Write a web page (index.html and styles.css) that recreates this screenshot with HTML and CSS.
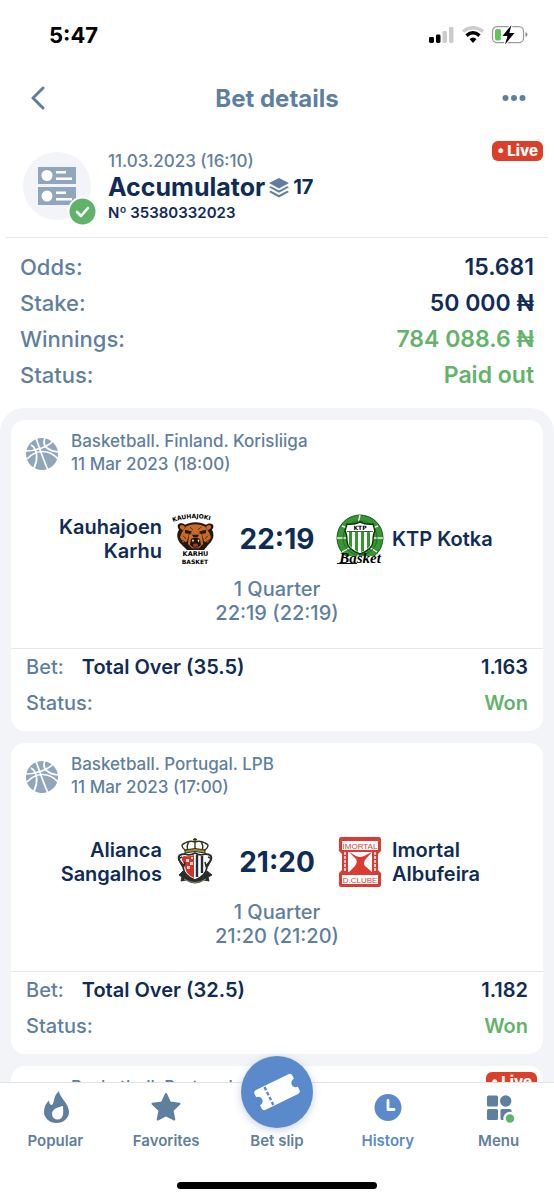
FILE: index.html
```html
<!DOCTYPE html>
<html lang="en">
<head>
	<meta charset="utf-8" />
	<meta name="viewport" content="width=device-width, initial-scale=1" />
	<title>Bet details</title>
	<link rel="stylesheet" href="styles.css">
</head>
<body>
    <!-- Shared icons -->
    <svg class="sprite" aria-hidden="true">
        <symbol id="ball" viewBox="0 0 32 32">
            <circle cx="16" cy="16" r="16" fill="#8fa6bd"/>
            <g fill="none" stroke="#fff" stroke-width="1.7">
                <path d="M10 0C13 9 17 21 22 32"/>
                <path d="M0 13C9 13 22 9 27 3"/>
                <path d="M19 0C15 9 24 13 32 14"/>
                <path d="M1 21C9 12 22 10 32 21"/>
                <path d="M5 7C12 11 12 22 8 30"/>
            </g>
        </symbol>
    </svg>

    <div class="statusbar">
        <span class="clock">5:47</span>
        <svg width="100" height="20" viewBox="0 0 100 20" aria-hidden="true">
            <rect x="1" y="12" width="5" height="6" rx="1.4"/>
            <rect x="8" y="9.500" width="4.500" height="8.500" rx="1.400"/>
            <rect x="14.500" y="6" width="4.500" height="12" rx="1.400" fill="#ccc"/>
            <rect x="21" y="2" width="4.500" height="16" rx="1.400" fill="#ccc"/>
            <path d="M35 6.500Q45 -1 55 6.500" fill="none" stroke="#ccc" stroke-width="3.400"/>
            <path d="M38.500 10.600Q45 5 51.500 10.600" fill="none" stroke="#000" stroke-width="3.400"/>
            <path d="M41.500 14Q45 11 48.500 14L45 18Z"/>
            <rect x="64.500" y="1.700" width="31" height="16" rx="4.500" fill="none" stroke="#9b9b9b" stroke-width="1.300"/>
            <path d="M97.500 7v5q2-.6 2-2.500t-2-2.500z" fill="#8b8b8b"/>
            <rect x="67" y="4" width="6" height="11.500" rx="2" fill="#61c655"/>
            <path d="M83.500 0L74.500 11h5L77 19.500 86.500 8h-5.200z" stroke="#fff" stroke-width="2.400" paint-order="stroke"/>
        </svg>
    </div>

    <header class="topbar">
        <button class="topbar-btn" type="button" aria-label="Back">
            <svg width="16" height="24" viewBox="0 0 16 24"><path d="M13 2L3 12 13 22" fill="none" stroke="#5f7f9f" stroke-width="3" stroke-linecap="round" stroke-linejoin="round"/></svg>
        </button>
        <h1>Bet details</h1>
        <button class="topbar-btn more" type="button" aria-label="More">
            <svg width="24" height="8" viewBox="0 0 24 8" fill="#5f7f9f"><circle cx="3.500" cy="4" r="3"/><circle cx="12" cy="4" r="3"/><circle cx="20.500" cy="4" r="3"/></svg>
        </button>
    </header>

    <main>
        <section class="summary">
            <svg class="avatar" width="74" height="74" viewBox="0 0 74 74" aria-hidden="true">
                <circle cx="34" cy="34" r="34" fill="#f3f4f8"/>
                <path d="M15 15h38v17H15zM15 35h38v18H15z" fill="#8fa6bd"/>
                <g fill="#fff">
                    <circle cx="24" cy="23.500" r="5.500"/><circle cx="24" cy="44" r="5.500"/>
                    <path d="M33 19h10v2.400H33zM33 25.500h16v2.400H33zM33 39.500h10v2.400H33zM33 46h16v2.400H33z"/>
                </g>
                <circle cx="59.500" cy="59.500" r="14" fill="#5fb36b" stroke="#fff" stroke-width="2"/>
                <path d="M54 60l4 4 7-8" fill="none" stroke="#fff" stroke-width="2.600" stroke-linecap="round" stroke-linejoin="round"/>
            </svg>
            <div class="summary-text">
                <div class="summary-date">11.03.2023 (16:10)</div>
                <h2>Accumulator
                    <svg width="20" height="20" viewBox="0 0 20 20" fill="#5f7f9f" aria-hidden="true"><path d="M10 0L20 5 10 10.500 0 5zM1.800 8.200L10 12.500 18.200 8.200 20 9.300 10 14.700 0 9.300zM1.800 12.800L10 17 18.200 12.800 20 14 10 19.500 0 14z"/></svg>
                    <span class="count">17</span>
                </h2>
                <div class="summary-no">Nº 35380332023</div>
            </div>
            <span class="live">• Live</span>
        </section>

        <dl class="totals">
            <div class="row"><dt>Odds:</dt><dd>15.681</dd></div>
            <div class="row"><dt>Stake:</dt><dd>50 000 ₦</dd></div>
            <div class="row"><dt>Winnings:</dt><dd class="green">784 088.6 ₦</dd></div>
            <div class="row"><dt>Status:</dt><dd class="green">Paid out</dd></div>
        </dl>

        <div class="events">
            <article class="card">
                <div class="card-head">
                    <svg class="sport" width="32" height="32"><use href="#ball"/></svg>
                    <div class="league">Basketball. Finland. Korisliiga<br>11 Mar 2023 (18:00)</div>
                </div>
                <div class="match">
                    <span class="team home">Kauhajoen Karhu</span>
                    <svg class="crest" width="50" height="50" viewBox="0 0 50 50" aria-hidden="true">
                        <path id="arc" d="M4 8Q26 0 50 9" fill="none"/>
                        <text class="crest-bold" font-size="6"><textPath href="#arc">KAUHAJOKI</textPath></text>
                        <g transform="translate(0 1.500) scale(1 .84)">
                            <path d="M10 17C6 10 12 7 16 11 22 7 31 7 37 11 42 7 47 11 43 17 46 23 44 30 40 34L35 41H18L12 34C8 29 7 22 10 17z" fill="#23180f"/>
                            <path d="M11 15C10 11 14 10 16 14L14 18zM42 15C43 11 39 10 37 14L39 18zM17 13Q26 8 36 13L40 20 42 26 39 32 35 31 33 22 27 20 20 22 18 31 14 32 11 26 13 20z" fill="#c96a26"/>
                            <path d="M16 17l7 2-2 3-5-1zM37 17l-7 2 2 3 5-1z" fill="#23180f"/>
                            <path d="M20 23L26.500 19 33 23 34 34 30 39H23L19 34z" fill="#c86e29"/>
                            <path d="M23 23h7l-1.500 3h-4zM22 28q4.500-3 9 0l1 7-3 3h-5l-3-3z" fill="#21120c"/>
                            <path d="M24 35q2.500-4 5 0v2h-5z" fill="#a63a24"/>
                            <path d="M23 29l1 3 1-3M28.500 29l1 3 1-3" fill="#fff"/>
                            <path d="M14 24l3 4M12 29l4 2M39 24l-3 4M41 29l-4 2M21 14l3 3M32 14l-3 3" stroke="#4a2a14"/>
                        </g>
                        <text class="crest-bold" x="26.500" y="42" font-size="6.500" text-anchor="middle">KARHU</text>
                        <text class="crest-bold" x="26" y="49.500" font-size="6" text-anchor="middle">BASKET</text>
                    </svg>
                    <strong class="score">22:19</strong>
                    <svg class="crest" width="50" height="50" viewBox="0 0 50 50" aria-hidden="true">
                        <circle cx="25" cy="24" r="23" fill="#36962f" stroke="#185520"/>
                        <path d="M25 1l-2 9M7 12l8 3M2 24h11M7 38l9-5M43 12l-8 3M48 24H37M42 38l-8-5M23 40v7" stroke="#e5f5df" stroke-width="1.400"/>
                        <circle cx="25" cy="24" r="17" fill="none" stroke="#1e6521" stroke-width=".8"/>
                        <path d="M12 10q7 1 13-2 6 3 13 2l2 7q-2 3-2 10 0 8-13 13-13-5-13-13 0-7-2-10z" fill="#fff" stroke="#15301a" stroke-width="1.400"/>
                        <path d="M14 18h3v16l-3-3zM20 18h3v20l-3-2zM26 18h3v19l-3 1zM32 18h3v14l-3 3z" fill="#36962f"/>
                        <path d="M12 17.500h26" stroke="#15301a" stroke-width=".8"/>
                        <text class="crest-bold" x="25" y="16" font-size="6" text-anchor="middle">KTP</text>
                        <path d="M0 42h50v8H0z" fill="#fff"/>
                        <path d="M2 49.500H22" stroke="#111"/>
                        <text class="crest-script" x="25" y="49" font-size="15" text-anchor="middle">Basket</text>
                    </svg>
                    <span class="team">KTP Kotka</span>
                </div>
                <div class="period">1 Quarter<br>22:19 (22:19)</div>
                <dl class="bet">
                    <div class="row"><dt>Bet:</dt><dd class="pick">Total Over (35.5)</dd><dd>1.163</dd></div>
                    <div class="row"><dt>Status:</dt><dd class="green">Won</dd></div>
                </dl>
            </article>

            <article class="card">
                <div class="card-head">
                    <svg class="sport" width="32" height="32"><use href="#ball"/></svg>
                    <div class="league">Basketball. Portugal. LPB<br>11 Mar 2023 (17:00)</div>
                </div>
                <div class="match">
                    <span class="team home">Alianca Sangalhos</span>
                    <svg class="crest" width="50" height="50" viewBox="0 0 50 50" aria-hidden="true">
                        <path d="M16 13q-6-5 0-7 5-3 10-1 5-2 10 1 6 2 0 7zM26 1v13M24 2.500h4M20 5q-3 4-1 8M32 5q3 4 1 8" fill="none" stroke="#33351f" stroke-width="1.400"/>
                        <path d="M16 13q10-3 20 0v3q-10-3-20 0z" fill="#a08b35" stroke="#33351f"/>
                        <path d="M10 38l4-4 3 4q9 8 18 0l3-4 5 4-4 2 1 4-5-1q-9 6-18 0l-5 1 1-4z" fill="#282d29" stroke="#282d29"/>
                        <path d="M16 17q5 2 10-1 5 3 10 1 8 0 6 6l-4 7q-1 9-12 13-11-4-12-13l-4-7q-2-6 6-6z" fill="#fff" stroke="#282d29" stroke-width="1.800"/>
                        <path d="M15 19q6 1 10-1v23q-9-4-9-12l-3-6q-1-3 2-4z" fill="#cf332e"/>
                        <path d="M17 22h3v3h-3zM21 25h3v3h-3zM18 29h3v3h-3zM22 20h2v2h-2z" fill="#f2d5cd"/>
                        <path d="M28 18v22M33 19v17" stroke="#222c38" stroke-width="2.400"/>
                        <path d="M13 20q-4 1-2 4l4 5 1-4M39 20q4 1 2 4l-4 5-1-4" fill="none" stroke="#282d29" stroke-width="1.500"/>
                        <path d="M15 42q11 7 22 0" fill="none" stroke="#849077"/>
                    </svg>
                    <strong class="score">21:20</strong>
                    <svg class="crest" width="50" height="50" viewBox="0 0 50 50" aria-hidden="true">
                        <path d="M6 0h38q2 0 2 2v12l-3 3v16l3 3v12q0 2-2 2H6q-2 0-2-2V36l3-3V17l-3-3V2q0-2 2-2z" fill="#dc3b33"/>
                        <path d="M7 4h36v9H7zM7 38h36v9H7zM13 15h24v20H13z" fill="#fff"/>
                        <path d="M14 15l7 4q4 2 8 0l8-4-7 8q-2 4 0 6l7 6H14l6-6q3-4 1-7z" fill="#dc3b33"/>
                        <path d="M10 15v20M40 15v20" stroke="#fff" stroke-width="1.500" stroke-dasharray="3 1"/>
                        <text class="crest-red" x="25" y="11.500" font-size="8" text-anchor="middle">IMORTAL</text>
                        <text class="crest-red" x="25" y="45.500" font-size="8" text-anchor="middle">D.CLUBE</text>
                    </svg>
                    <span class="team">Imortal Albufeira</span>
                </div>
                <div class="period">1 Quarter<br>21:20 (21:20)</div>
                <dl class="bet">
                    <div class="row"><dt>Bet:</dt><dd class="pick">Total Over (32.5)</dd><dd>1.182</dd></div>
                    <div class="row"><dt>Status:</dt><dd class="green">Won</dd></div>
                </dl>
            </article>

            <article class="card">
                <div class="card-head">
                    <svg class="sport" width="32" height="32"><use href="#ball"/></svg>
                    <div class="league">Basketball. Portugal. LPB</div>
                    <span class="live">• Live</span>
                </div>
            </article>
        </div>
    </main>

    <nav>
        <div class="tabs">
            <a class="tab" href="#popular">
                <svg width="32" height="32" viewBox="-4 0 32 32"><path d="M16 0C16 6 26 12 26 21A12.500 11 0 0 1 1 21C1 16 3 12 6 9.500 6 12 7 14 9 14 12 11 10 5 16 0zM20 15C15 16 9 18 9 23A5.500 5.500 0 0 0 20 23C20.500 20 20 18 20 15z" fill="#5f7f9f" fill-rule="evenodd"/></svg>
                Popular
            </a>
            <a class="tab" href="#favorites">
                <svg width="32" height="32" viewBox="0 0 32 32"><path d="M16 3L20 11.500 29.500 12.800 22.500 19.500 24.300 28.500 16 24.300 7.700 28.500 9.500 19.500 2.500 12.800 12 11.500z" fill="#5f7f9f" stroke="#5f7f9f" stroke-width="2" stroke-linejoin="round"/></svg>
                Favorites
            </a>
            <a class="tab slip" href="#betslip">
                <span class="slip-circle">
                    <svg width="46" height="46" viewBox="0 0 46 46"><g transform="rotate(-26 23 23)"><path d="M5 12h36q3 0 3 3v3.500a4.500 4.500 0 0 0 0 9V31q0 3-3 3H5q-3 0-3-3v-3.500a4.500 4.500 0 0 0 0-9V15q0-3 3-3z" fill="#fff"/><path d="M14 13v20" stroke="#5a8acb" stroke-width="2.400" stroke-dasharray="3.600 2"/></g></svg>
                </span>
                Bet slip
            </a>
            <a class="tab active" href="#history" aria-current="page">
                <svg width="32" height="32" viewBox="0 0 32 32"><circle cx="16" cy="16.500" r="13.500" fill="#5a8acb"/><path d="M16 9.500v9h6" fill="none" stroke="#fff" stroke-width="2.800" stroke-linecap="round" stroke-linejoin="round"/></svg>
                History
            </a>
            <a class="tab" href="#menu">
                <svg width="32" height="32" viewBox="0 0 32 32" fill="#5f7f9f"><rect x="4" y="4.500" width="11" height="11" rx="1.500"/><circle cx="22.700" cy="10" r="5.700"/><rect x="4" y="18" width="11" height="11" rx="1.500"/><rect x="17.500" y="18" width="11" height="11" rx="1.500"/><circle cx="27" cy="27.500" r="5.500" fill="#5fb36b" stroke="#fff" stroke-width="2.400"/></svg>
                Menu
            </a>
        </div>
        <div class="home-bar"></div>
    </nav>
</body>
</html>
```
FILE: styles.css
```css
* {
    box-sizing:border-box;
}

body {
    display:flex;
    flex-direction:column;
    height:100vh;
    margin:0;
    background:#fff;
    color:#0f2c56;
    font-family:Inter, "Liberation Sans", sans-serif;
    font-weight:500;
}

h1, h2, dl, dd {
    margin:0;
}

.sprite {
    position:absolute;
    width:0;
    height:0;
}

/*Phone status bar*/
.statusbar {
    display:flex;
    align-items:center;
    justify-content:space-between;
    height:70px;
    padding:0 26px 0 49px;
}
.clock {
    color:#000;
    font-size:22px;
    font-weight:700;
}

.topbar {
    display:flex;
    align-items:center;
    justify-content:space-between;
    height:56px;
    padding:0 20px;
}
.topbar h1 {
    color:#5f7f9f;
    font-size:24px;
    font-weight:700;
}
.topbar-btn {
    display:flex;
    align-items:center;
    width:40px;
    height:40px;
    padding:0 10px;
    border:0;
    background:none;
}
.topbar-btn.more {
    padding:0 8px;
}

main {
    flex:1;
    min-height:0;
    overflow-y:auto;
    scrollbar-width:none;
}

.summary {
    display:flex;
    align-items:flex-start;
    margin:0 6px;
    padding:15px 5px 9px 17px;
    border-bottom:1px solid #e4e7ed;
}
.avatar {
    flex:none;
    margin-top:11px;
}
.summary-text {
    flex:1;
    padding:9px 0 5px 11px;
}
.summary-date {
    color:#5f7f9f;
    font-size:17px;
    line-height:22px;
}
.summary h2 {
    display:flex;
    align-items:center;
    gap:4px;
    font-size:25px;
    font-weight:700;
    line-height:31px;
}
.count {
    font-size:20px;
}
.summary-no {
    font-size:15px;
    font-weight:600;
    line-height:20px;
}

.live {
    flex:none;
    padding:0 5px;
    border-radius:6px;
    background:#dd3e27;
    color:#fff;
    font-size:15px;
    font-weight:800;
    line-height:20px;
}

/*Label and value rows*/
.row {
    display:flex;
    align-items:center;
    justify-content:space-between;
    height:36px;
}
.row dt {
    color:#5f7f9f;
}
.row dd {
    font-weight:600;
}
.row dd.green {
    color:#63b36c;
}
.totals {
    padding:11px 20px 15px;
    font-size:22px;
}
.totals dd {
    font-size:23px;
}

.events {
    display:flex;
    flex-direction:column;
    gap:12px;
    padding:12px 11px;
    border-radius:24px 24px 0 0;
    background:#f3f4f8;
}
.card {
    border-radius:14px;
    background:#fff;
}
.card-head {
    display:flex;
    align-items:flex-start;
    padding:10px 6px 0 15px;
}
.sport {
    flex:none;
    margin:8px 13px 0 0;
}
.league {
    flex:1;
    color:#5f7f9f;
    font-size:17px;
    line-height:23px;
}
.card-head .live {
    margin-top:-4px;
}

.match {
    display:grid;
    grid-template-columns:1fr 50px 116px 50px 1fr;
    align-items:center;
    padding:38px 15px 13px;
}
.team {
    padding:0 7px;
    font-size:20px;
    font-weight:600;
    line-height:24px;
}
.home {
    text-align:right;
}
.score {
    font-size:28px;
    font-weight:700;
    text-align:center;
}
.crest {
    overflow:visible;
}
.crest-bold {
    font-family:"DejaVu Sans", sans-serif;
    font-weight:700;
}
.crest-script {
    font-family:"Liberation Serif", serif;
    font-style:italic;
    font-weight:700;
}
.crest-red {
    fill:#dc3b33;
    font-family:"Liberation Sans", sans-serif;
}

.period {
    padding-bottom:23px;
    color:#5f7f9f;
    font-size:20px;
    line-height:24px;
    text-align:center;
}
.bet {
    padding:0 15px 10px;
    border-top:1px solid #e4e7ed;
    font-size:20px;
}
.pick {
    flex:1;
    padding-left:18px;
}

/*Bottom navigation*/
nav {
    position:relative;
    height:118px;
    border-top:1px solid #dfe3ea;
    background:#fff;
}
.tabs {
    display:grid;
    grid-template-columns:repeat(5, 1fr);
}
.tab {
    display:flex;
    flex-direction:column;
    align-items:center;
    gap:8px;
    padding-top:8px;
    color:#5f7f9f;
    font-size:15px;
    font-weight:600;
    line-height:20px;
    text-decoration:none;
}
.tab.active {
    color:#5a8acb;
}
.slip {
    gap:3px;
    margin-top:-35px;
}
.slip-circle {
    display:flex;
    align-items:center;
    justify-content:center;
    width:72px;
    height:72px;
    border-radius:50%;
    background:#5a8acb;
    box-shadow:0 2px 8px rgba(40, 70, 120, .25);
}
.home-bar {
    width:36%;
    height:7px;
    margin:31px auto 0;
    border-radius:4px;
    background:#000;
}
```
